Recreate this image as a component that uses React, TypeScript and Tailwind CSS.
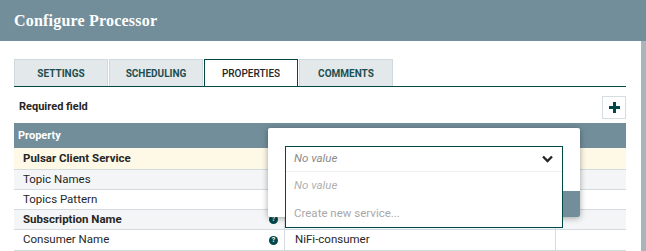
import React from "react";

const rows = [
  { name: "Pulsar Client Service", bold: true, bg: "bg-[#fef9e7]", h: "h-[22px]", help: false, value: "" },
  { name: "Topic Names", bold: false, bg: "bg-[#f3f5f6]", h: "h-[20px]", help: false, value: "" },
  { name: "Topics Pattern", bold: false, bg: "bg-white", h: "h-[20px]", help: false, value: "" },
  { name: "Subscription Name", bold: true, bg: "bg-[#f3f5f6]", h: "h-[20px]", help: true, value: "" },
  { name: "Consumer Name", bold: false, bg: "bg-white", h: "h-[21px]", help: true, value: "NiFi-consumer" },
];

function Help() {
  return (
    <span className="w-[9px] h-[9px] rounded-full bg-[#004849] text-white text-[7px] font-bold leading-[9px] flex items-center justify-center">
      ?
    </span>
  );
}

export default function App() {
  return (
    <div className="w-[646px] h-[251px] overflow-hidden bg-white relative font-['Roboto',sans-serif] text-[#262626]">
      <div className="h-[41px] bg-[#728e9b] flex items-center pl-[14px]">
        <span className="text-white font-bold text-[16px] font-['Liberation_Serif',serif] tracking-[0.2px]">
          Configure Processor
        </span>
      </div>
      <div className="flex h-[210px]">
        <div className="w-[641px] pl-[14px] pr-[15px] pt-[18px]">
          <div className="flex gap-[1px] border-b border-[#004849] h-[28px]">
            {["SETTINGS", "SCHEDULING", "PROPERTIES", "COMMENTS"].map((t) =>
              t === "PROPERTIES" ? (
                <div
                  key={t}
                  className="w-[94px] h-[27px] bg-white border border-b-0 border-[#004849] flex items-center justify-center text-[10px] font-medium text-[#262626]"
                >
                  {t}
                </div>
              ) : (
                <div
                  key={t}
                  className="w-[94px] h-[27px] bg-[#e3e8eb] border border-b-0 border-[#cfd8dc] flex items-center justify-center text-[10px] font-bold text-[#1e4f50]"
                >
                  {t}
                </div>
              )
            )}
          </div>
          <div className="h-[36px] flex items-center justify-between pt-[5px]">
            <span className="pl-[5px] text-[11px] font-bold text-[#262626]">Required field</span>
            <div className="w-[24px] h-[23px] border border-[#d6dde0] bg-white flex items-center justify-center">
              <svg width="11" height="11" viewBox="0 0 11 11">
                <rect x="4" y="0" width="3" height="11" fill="#004849" />
                <rect x="0" y="4" width="11" height="3" fill="#004849" />
              </svg>
            </div>
          </div>
          <div className="h-[25px] bg-[#728e9b] flex items-center pl-[4px] pt-[1px] text-white text-[11px] font-bold">
            Property
          </div>
          {rows.map((r) => (
            <div
              key={r.name}
              className={`grid grid-cols-[270px_272px_70px] border-b border-[#d3dbdf] text-[11.5px] ${r.bg} ${r.h}`}
            >
              <div className="flex items-center justify-between pl-[9px] pr-[6px]">
                <span className={r.bold ? "font-bold" : ""}>{r.name}</span>
                {r.help && <Help />}
              </div>
              <div className="flex items-center pl-[10px] border-l border-r border-[#d3dbdf]">
                {r.value}
              </div>
              <div />
            </div>
          ))}
        </div>
        <div className="w-[5px] bg-[#aab5bb]" />
      </div>

      {/* combo editor popup */}
      <div className="absolute left-[268px] top-[128px] w-[312px] h-[89px] bg-white rounded-[2px] shadow-[0_1px_6px_rgba(0,0,0,0.35)] overflow-hidden">
        <div className="absolute right-0 bottom-0 w-[90px] h-[26px] bg-[#728e9b]" />
      </div>
      <div className="absolute left-[285px] top-[146px] w-[278px] h-[82px] bg-white border border-[#004849]">
        <div className="h-[25px] flex items-center justify-between pl-[8px] pr-[9px] border-b border-[#eceff1]">
          <span className="italic text-[11.5px] text-[#8a8a8a]">No value</span>
          <svg width="11" height="8" viewBox="0 0 11 8">
            <path d="M1 1.5 L5.5 6 L10 1.5" stroke="#262626" strokeWidth="2.4" fill="none" />
          </svg>
        </div>
        <div className="h-[28px] flex items-center pl-[8px] italic text-[11.5px] text-[#b0b0b0]">No value</div>
        <div className="h-[27px] flex items-center pl-[8px] text-[11.5px] text-[#a8a8a8]">Create new service...</div>
      </div>
    </div>
  );
}
